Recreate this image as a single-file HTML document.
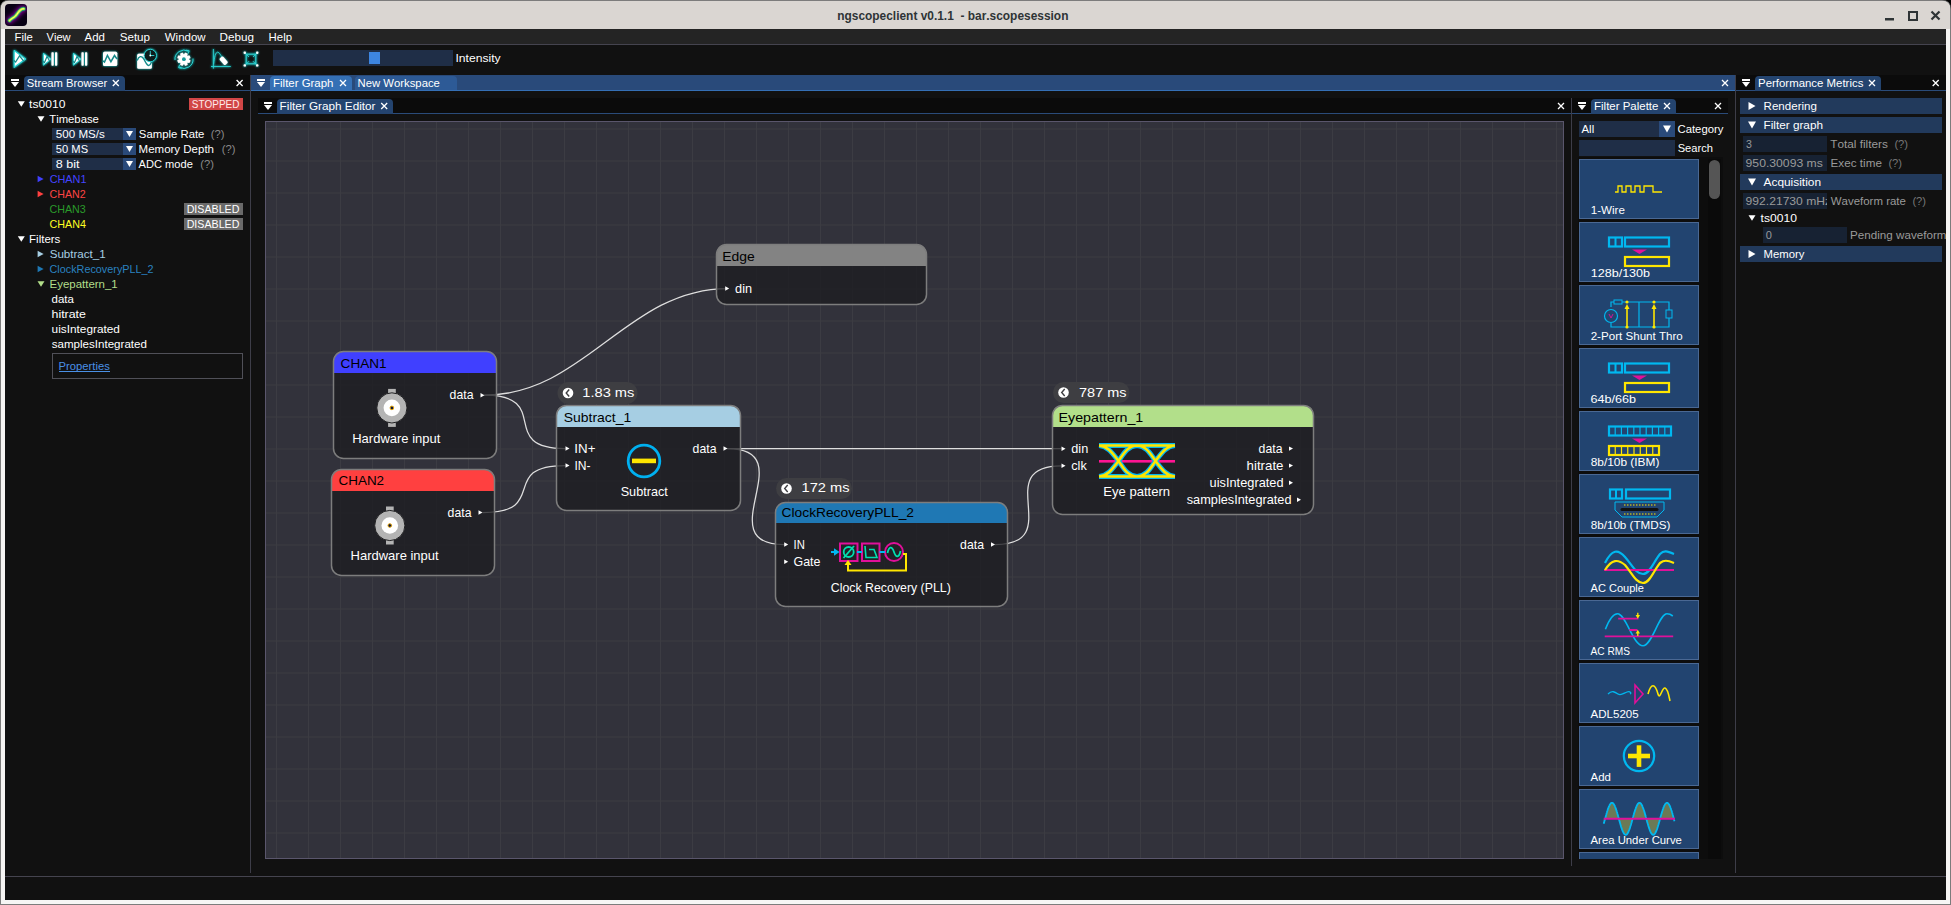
<!DOCTYPE html>
<html><head><meta charset="utf-8"><style>
html,body{margin:0;padding:0;width:1951px;height:905px;overflow:hidden;background:#000;}
svg{display:block;font-kerning:none;font-family:"Liberation Sans",sans-serif;}
</style></head><body>
<svg width="1951" height="905" viewBox="0 0 1951 905">
<rect x="0" y="0" width="1951" height="905" fill="#000" />
<path d="M0,9 Q0,0 9,0 L1942,0 Q1951,0 1951,9 L1951,905 L0,905 Z" fill="#7c7c7c" stroke="none" stroke-width="1" />
<path d="M1,9 Q1,1 9,1 L1942,1 Q1950,1 1950,9 L1950,904 L1,904 Z" fill="#f6f5f4" stroke="none" stroke-width="1" />
<path d="M1,9 Q1,1 9,1 L1942,1 Q1950,1 1950,9 L1950,29 L1,29 Z" fill="#dad6d2" stroke="none" stroke-width="1" />
<text xml:space="preserve" x="837.21" y="20" font-size="13.5" fill="#2e3436" font-weight="bold" textLength="231.23" lengthAdjust="spacingAndGlyphs" >ngscopeclient v0.1.1  - bar.scopesession</text>
<defs>
<linearGradient id="icbg" x1="0" y1="0" x2="1" y2="1"><stop offset="0" stop-color="#10002a"/><stop offset="0.45" stop-color="#4a0a5a"/><stop offset="1" stop-color="#05001a"/></linearGradient>
<filter id="glow" x="-40%" y="-40%" width="180%" height="180%"><feGaussianBlur in="SourceAlpha" stdDeviation="1.3" result="b"/><feFlood flood-color="#18a0a0" result="c"/><feComposite in="c" in2="b" operator="in" result="g"/><feMerge><feMergeNode in="g"/><feMergeNode in="g"/><feMergeNode in="SourceGraphic"/></feMerge></filter>
</defs>
<rect x="5" y="4" width="22" height="22" fill="#070014" rx="4" />
<filter id="icblur" x="-50%" y="-50%" width="200%" height="200%"><feGaussianBlur stdDeviation="2"/></filter>
<clipPath id="icclip"><rect x="5" y="4" width="22" height="22" rx="4"/></clipPath>
<g clip-path="url(#icclip)">
<path d="M9.5,20.5 C11,18.5 13.5,18 15.5,16 C17.5,14 18.5,11.5 20.5,10 C21.8,9 23,8.6 23.8,8.8" fill="none" stroke="#8a10a0" stroke-width="6" stroke-linecap="round" filter="url(#icblur)"/>
<path d="M9.5,20.5 C11,18.5 13.5,18 15.5,16 C17.5,14 18.5,11.5 20.5,10 C21.8,9 23,8.6 23.8,8.8" fill="none" stroke="#10b070" stroke-width="3.8" stroke-linecap="round"/>
<path d="M9.5,20.5 C11,18.5 13.5,18 15.5,16 C17.5,14 18.5,11.5 20.5,10 C21.8,9 23,8.6 23.8,8.8" fill="none" stroke="#d8f030" stroke-width="2.2" stroke-linecap="round"/>
<path d="M9.5,20.5 C11,18.5 13.5,18 15.5,16 C17.5,14 18.5,11.5 20.5,10 C21.8,9 23,8.6 23.8,8.8" fill="none" stroke="#ffffa0" stroke-width="0.8" stroke-linecap="round"/>
</g>
<rect x="1885" y="18" width="9" height="2.5" fill="#2e3436" />
<rect x="1909" y="12" width="8" height="8" fill="none" stroke="#2e3436" stroke-width="2" />
<path d="M1931.5,11.5 L1939.5,19.5 M1939.5,11.5 L1931.5,19.5" fill="none" stroke="#2e3436" stroke-width="2.2" />
<rect x="5" y="29" width="1941" height="871" fill="#111111" />
<rect x="5" y="29" width="1941" height="15" fill="#242424" />
<rect x="5" y="44" width="1941" height="1" fill="#45444f" />
<text xml:space="preserve" x="14.59" y="41" font-size="10.97" fill="#fff" textLength="18.28" lengthAdjust="spacingAndGlyphs" >File</text>
<text xml:space="preserve" x="46.53" y="41" font-size="10.97" fill="#fff" textLength="24.05" lengthAdjust="spacingAndGlyphs" >View</text>
<text xml:space="preserve" x="84.56" y="41" font-size="10.97" fill="#fff" textLength="20.36" lengthAdjust="spacingAndGlyphs" >Add</text>
<text xml:space="preserve" x="119.66" y="41" font-size="10.97" fill="#fff" textLength="30.39" lengthAdjust="spacingAndGlyphs" >Setup</text>
<text xml:space="preserve" x="164.80" y="41" font-size="10.97" fill="#fff" textLength="40.78" lengthAdjust="spacingAndGlyphs" >Window</text>
<text xml:space="preserve" x="219.57" y="41" font-size="10.97" fill="#fff" textLength="34.37" lengthAdjust="spacingAndGlyphs" >Debug</text>
<text xml:space="preserve" x="268.59" y="41" font-size="10.97" fill="#fff" textLength="23.45" lengthAdjust="spacingAndGlyphs" >Help</text>
<g filter="url(#glow)">
<path d="M14.2,50.5 L25.6,58.9 L14.2,67.3 Z" fill="#fff" stroke="#2ad4d4" stroke-width="1.2" stroke-linejoin="round"/>
<path d="M13.8,60.4 L15.6,62.1 L19.5,55.8 L23.5,60.9" fill="none" stroke="#138a8a" stroke-width="1.3" />
</g>
<g filter="url(#glow)">
<path d="M43.4,53.3 L51,59.2 L43.4,65.2 Z" fill="#fff" stroke="#2ad4d4" stroke-width="1" stroke-linejoin="round"/>
<path d="M43,61.5 L44.5,62.5 L47,56.5 L49.5,60.8" fill="none" stroke="#138a8a" stroke-width="1.2" />
<rect x="51.5" y="52.2" width="2.2" height="13.6" fill="#fff" rx="0.8" />
<rect x="55" y="52.2" width="2.2" height="13.6" fill="#fff" rx="0.8" />
</g>
<g filter="url(#glow)">
<path d="M73.4,53.3 L81,59.2 L73.4,65.2 Z" fill="#fff" stroke="#2ad4d4" stroke-width="1" stroke-linejoin="round"/>
<path d="M73,61.5 L74.5,62.5 L77,56.5 L79.5,60.8" fill="none" stroke="#138a8a" stroke-width="1.2" />
<rect x="81.5" y="52.2" width="2.2" height="13.6" fill="#fff" rx="0.8" />
<rect x="85" y="52.2" width="2.2" height="13.6" fill="#fff" rx="0.8" />
</g>
<g filter="url(#glow)">
<rect x="103" y="51.7" width="14.2" height="14.3" fill="#fff" rx="1.5" />
<path d="M103,60.8 L104.5,62 L107.4,55.5 L110.9,61.7 L114.5,55.5 L117,59" fill="none" stroke="#138a8a" stroke-width="1.5" />
</g>
<g filter="url(#glow)">
<rect x="137.2" y="53.8" width="14.6" height="15" fill="#fff" rx="1.5" />
<path d="M137.2,60.5 C139,56 141.5,55.5 143.5,58.5 C145.5,61.5 147,66 149,65.4 C150.5,65 151,63 151.8,61" fill="none" stroke="#138a8a" stroke-width="1.4" />
<circle cx="150.3" cy="55.5" r="6.2" fill="#0c1c1c" stroke="#2ad4d4" stroke-width="1"/>
<path d="M150.3,50.8 L150.3,55.5 L154.3,55.5" fill="none" stroke="#2ad4d4" stroke-width="0.9" />
<circle cx="150.3" cy="55.5" r="0.9" fill="#fff"/>
</g>
<g filter="url(#glow)">
<path d="M175,60 A9.1,9.1 0 0 1 188.4,51.2" fill="none" stroke="#2ad4d4" stroke-width="1" />
<path d="M186,50.2 L189.2,50.8 L188.2,53.6" fill="none" stroke="#2ad4d4" stroke-width="1" />
<path d="M193,58.5 A9.1,9.1 0 0 1 179.4,67.2" fill="none" stroke="#2ad4d4" stroke-width="1" />
<path d="M181.6,68.4 L178.6,67.6 L179.6,64.8" fill="none" stroke="#2ad4d4" stroke-width="1" />
<circle cx="183.9" cy="59.2" r="5" fill="#fff"/>
<rect x="182.4" y="52.6" width="3" height="3" rx="0.6" fill="#fff" transform="rotate(22.5 183.9 59.2)"/>
<rect x="182.4" y="52.6" width="3" height="3" rx="0.6" fill="#fff" transform="rotate(67.5 183.9 59.2)"/>
<rect x="182.4" y="52.6" width="3" height="3" rx="0.6" fill="#fff" transform="rotate(112.5 183.9 59.2)"/>
<rect x="182.4" y="52.6" width="3" height="3" rx="0.6" fill="#fff" transform="rotate(157.5 183.9 59.2)"/>
<rect x="182.4" y="52.6" width="3" height="3" rx="0.6" fill="#fff" transform="rotate(202.5 183.9 59.2)"/>
<rect x="182.4" y="52.6" width="3" height="3" rx="0.6" fill="#fff" transform="rotate(247.5 183.9 59.2)"/>
<rect x="182.4" y="52.6" width="3" height="3" rx="0.6" fill="#fff" transform="rotate(292.5 183.9 59.2)"/>
<rect x="182.4" y="52.6" width="3" height="3" rx="0.6" fill="#fff" transform="rotate(337.5 183.9 59.2)"/>
<circle cx="183.9" cy="59.2" r="1.9" fill="#139a9a"/>
</g>
<g filter="url(#glow)">
<path d="M213.4,49 L213.4,68.6 M211,66.5 L230.8,66.5" fill="none" stroke="#2ad4d4" stroke-width="0.9" />
<path d="M213.6,64 C214.5,57 215.5,52.2 217.6,52.2 C219.5,52.2 220.5,55 222,57.5" fill="none" stroke="#2ad4d4" stroke-width="0.9" />
<rect x="221.3" y="56.5" width="4.6" height="8.5" rx="1.2" fill="#fff" transform="rotate(-40 223.6 60.7)"/>
</g>
<g filter="url(#glow)">
<rect x="246.2" y="54.2" width="9.6" height="9.6" fill="none" stroke="#2ad4d4" stroke-width="1.1" />
<path d="M244.8,52.8 L249,57 M257.2,52.8 L253,57 M244.8,65.4 L249,61.2 M257.2,65.4 L253,61.2" fill="none" stroke="#2ad4d4" stroke-width="0.9" />
<circle cx="244.8" cy="52.8" r="1.2" fill="#fff"/>
<circle cx="257.2" cy="52.8" r="1.2" fill="#fff"/>
<circle cx="244.8" cy="65.4" r="1.2" fill="#fff"/>
<circle cx="257.2" cy="65.4" r="1.2" fill="#fff"/>
</g>
<rect x="273" y="50" width="180" height="16" fill="#1f2e47" />
<rect x="369" y="52" width="11" height="12" fill="#3d85e0" />
<text xml:space="preserve" x="455.48" y="62" font-size="10.97" fill="#fff" textLength="45.14" lengthAdjust="spacingAndGlyphs" >Intensity</text>
<rect x="250" y="75" width="1" height="798" fill="#3d3d48" />
<rect x="1735" y="75" width="1" height="798" fill="#3d3d48" />
<rect x="5" y="876" width="1941" height="1" fill="#45444f" />
<rect x="5" y="75" width="245" height="15" fill="#0b0b0b" />
<rect x="5" y="90" width="245" height="1" fill="#2a4b79" />
<rect x="11" y="79" width="8" height="2" fill="#fff" />
<path d="M11,82 L19,82 L15,87 Z" fill="#fff" stroke="none" stroke-width="1" />
<path d="M24,91 L24,80 Q24,76 28,76 L121,76 Q125,76 125,80 L125,91 Z" fill="#24446f" stroke="none" stroke-width="1" />
<text xml:space="preserve" x="26.79" y="87" font-size="10.97" fill="#fff" textLength="80.50" lengthAdjust="spacingAndGlyphs" >Stream Browser</text>
<path d="M112.8,80 L118.8,86 M118.8,80 L112.8,86" fill="none" stroke="#fff" stroke-width="1.3" />
<path d="M236.6,80 L242.6,86 M242.6,80 L236.6,86" fill="none" stroke="#fff" stroke-width="1.3" />
<rect x="251" y="75" width="1484" height="16" fill="#294a7a" />
<rect x="257" y="79" width="8" height="2" fill="#fff" />
<path d="M257,82 L265,82 L261,87 Z" fill="#fff" stroke="none" stroke-width="1" />
<rect x="251" y="90" width="1484" height="1" fill="#3570b5" />
<path d="M270,90 L270,80 Q270,76 274,76 L348,76 Q352,76 352,80 L352,90 Z" fill="#3570b5" stroke="none" stroke-width="1" />
<text xml:space="preserve" x="273.09" y="87" font-size="10.97" fill="#fff" textLength="60.39" lengthAdjust="spacingAndGlyphs" >Filter Graph</text>
<path d="M340,80 L346,86 M346,80 L340,86" fill="none" stroke="#fff" stroke-width="1.3" />
<path d="M355,90 L355,80 Q355,76 359,76 L453,76 Q457,76 457,80 L457,90 Z" fill="#2d5a96" stroke="none" stroke-width="1" />
<text xml:space="preserve" x="357.60" y="87" font-size="10.97" fill="#fff" textLength="82.28" lengthAdjust="spacingAndGlyphs" >New Workspace</text>
<path d="M1722,80 L1728,86 M1728,80 L1722,86" fill="none" stroke="#fff" stroke-width="1.3" />
<rect x="1736" y="75" width="210" height="15" fill="#0b0b0b" />
<rect x="1736" y="90" width="210" height="1" fill="#2a4b79" />
<rect x="1742" y="79" width="8" height="2" fill="#fff" />
<path d="M1742,82 L1750,82 L1746,87 Z" fill="#fff" stroke="none" stroke-width="1" />
<path d="M1755,91 L1755,80 Q1755,76 1759,76 L1877,76 Q1881,76 1881,80 L1881,91 Z" fill="#24446f" stroke="none" stroke-width="1" />
<text xml:space="preserve" x="1758.09" y="87" font-size="10.97" fill="#fff" textLength="105.26" lengthAdjust="spacingAndGlyphs" >Performance Metrics</text>
<path d="M1869,80 L1875,86 M1875,80 L1869,86" fill="none" stroke="#fff" stroke-width="1.3" />
<path d="M1932.7,80 L1938.7,86 M1938.7,80 L1932.7,86" fill="none" stroke="#fff" stroke-width="1.3" />
<rect x="258" y="98" width="1313" height="15" fill="#0b0b0b" />
<rect x="258" y="113" width="1313" height="1" fill="#2a4b79" />
<rect x="264" y="102" width="8" height="2" fill="#fff" />
<path d="M264,105 L272,105 L268,110 Z" fill="#fff" stroke="none" stroke-width="1" />
<path d="M277,114 L277,103 Q277,99 281,99 L389,99 Q393,99 393,103 L393,114 Z" fill="#24446f" stroke="none" stroke-width="1" />
<text xml:space="preserve" x="279.64" y="110" font-size="10.97" fill="#fff" textLength="95.86" lengthAdjust="spacingAndGlyphs" >Filter Graph Editor</text>
<path d="M381.2,103 L387.2,109 M387.2,103 L381.2,109" fill="none" stroke="#fff" stroke-width="1.3" />
<path d="M1558,103 L1564,109 M1564,103 L1558,109" fill="none" stroke="#fff" stroke-width="1.3" />
<rect x="1571" y="98" width="1" height="768" fill="#3d3d48" />
<rect x="1572" y="98" width="156" height="15" fill="#0b0b0b" />
<rect x="1572" y="113" width="156" height="1" fill="#2a4b79" />
<rect x="1578" y="102" width="8" height="2" fill="#fff" />
<path d="M1578,105 L1586,105 L1582,110 Z" fill="#fff" stroke="none" stroke-width="1" />
<path d="M1591,114 L1591,103 Q1591,99 1595,99 L1672,99 Q1676,99 1676,103 L1676,114 Z" fill="#24446f" stroke="none" stroke-width="1" />
<text xml:space="preserve" x="1594.09" y="110" font-size="10.97" fill="#fff" textLength="64.30" lengthAdjust="spacingAndGlyphs" >Filter Palette</text>
<path d="M1664,103 L1670,109 M1670,103 L1664,109" fill="none" stroke="#fff" stroke-width="1.3" />
<path d="M1715,103 L1721,109 M1721,103 L1715,109" fill="none" stroke="#fff" stroke-width="1.3" />
<path d="M17.8,101.25 L24.8,101.25 L21.3,106.75 Z" fill="#fff" stroke="none" stroke-width="1" />
<text xml:space="preserve" x="29.10" y="108" font-size="10.97" fill="#fff" textLength="36.33" lengthAdjust="spacingAndGlyphs" >ts0010</text>
<rect x="189" y="98" width="54" height="12" fill="#d14646" />
<text xml:space="preserve" x="191.74" y="108" font-size="10.97" fill="#ffeaea" textLength="47.67" lengthAdjust="spacingAndGlyphs" >STOPPED</text>
<path d="M37.5,116.25 L44.5,116.25 L41,121.75 Z" fill="#fff" stroke="none" stroke-width="1" />
<text xml:space="preserve" x="49.22" y="123" font-size="10.97" fill="#fff" textLength="49.66" lengthAdjust="spacingAndGlyphs" >Timebase</text>
<rect x="52" y="128" width="84" height="12" fill="#1f2e47" />
<rect x="123" y="128" width="13" height="12" fill="#2a4a7a" />
<path d="M126.0,131.0 L133.0,131.0 L129.5,137.0 Z" fill="#fff" stroke="none" stroke-width="1" />
<text xml:space="preserve" x="55.84" y="138" font-size="10.97" fill="#fff" textLength="49.01" lengthAdjust="spacingAndGlyphs" >500 MS/s</text>
<text xml:space="preserve" x="138.89" y="138" font-size="10.97" fill="#fff" textLength="65.52" lengthAdjust="spacingAndGlyphs" >Sample Rate</text>
<text xml:space="preserve" x="210.70" y="138" font-size="10.97" fill="#8a8a8a" textLength="13.67" lengthAdjust="spacingAndGlyphs" >(?)</text>
<rect x="52" y="143" width="84" height="12" fill="#1f2e47" />
<rect x="123" y="143" width="13" height="12" fill="#2a4a7a" />
<path d="M126.0,146.0 L133.0,146.0 L129.5,152.0 Z" fill="#fff" stroke="none" stroke-width="1" />
<text xml:space="preserve" x="55.86" y="153" font-size="10.97" fill="#fff" textLength="32.20" lengthAdjust="spacingAndGlyphs" >50 MS</text>
<text xml:space="preserve" x="138.58" y="153" font-size="10.97" fill="#fff" textLength="75.40" lengthAdjust="spacingAndGlyphs" >Memory Depth</text>
<text xml:space="preserve" x="221.70" y="153" font-size="10.97" fill="#8a8a8a" textLength="13.67" lengthAdjust="spacingAndGlyphs" >(?)</text>
<rect x="52" y="158" width="84" height="12" fill="#1f2e47" />
<rect x="123" y="158" width="13" height="12" fill="#2a4a7a" />
<path d="M126.0,161.0 L133.0,161.0 L129.5,167.0 Z" fill="#fff" stroke="none" stroke-width="1" />
<text xml:space="preserve" x="55.66" y="168" font-size="10.97" fill="#fff" textLength="23.78" lengthAdjust="spacingAndGlyphs" >8 bit</text>
<text xml:space="preserve" x="138.56" y="168" font-size="10.97" fill="#fff" textLength="54.31" lengthAdjust="spacingAndGlyphs" >ADC mode</text>
<text xml:space="preserve" x="200.20" y="168" font-size="10.97" fill="#8a8a8a" textLength="13.67" lengthAdjust="spacingAndGlyphs" >(?)</text>
<path d="M37.6,175.75 L43.6,179 L37.6,182.25 Z" fill="#4040ff" stroke="none" stroke-width="1" />
<text xml:space="preserve" x="49.65" y="183" font-size="10.97" fill="#4444ff" textLength="36.88" lengthAdjust="spacingAndGlyphs" >CHAN1</text>
<path d="M37.6,190.75 L43.6,194 L37.6,197.25 Z" fill="#ff4040" stroke="none" stroke-width="1" />
<text xml:space="preserve" x="49.55" y="198" font-size="10.97" fill="#ff4444" textLength="36.09" lengthAdjust="spacingAndGlyphs" >CHAN2</text>
<text xml:space="preserve" x="49.54" y="213" font-size="10.97" fill="#2a9a2a" textLength="36.24" lengthAdjust="spacingAndGlyphs" >CHAN3</text>
<text xml:space="preserve" x="49.54" y="228" font-size="10.97" fill="#ffff22" textLength="36.33" lengthAdjust="spacingAndGlyphs" >CHAN4</text>
<rect x="184" y="203" width="59" height="12" fill="#6a6a6a" />
<text xml:space="preserve" x="186.65" y="213" font-size="10.97" fill="#fff" textLength="52.79" lengthAdjust="spacingAndGlyphs" >DISABLED</text>
<rect x="184" y="218" width="59" height="12" fill="#6a6a6a" />
<text xml:space="preserve" x="186.65" y="228" font-size="10.97" fill="#fff" textLength="52.79" lengthAdjust="spacingAndGlyphs" >DISABLED</text>
<path d="M17.8,236.25 L24.8,236.25 L21.3,241.75 Z" fill="#fff" stroke="none" stroke-width="1" />
<text xml:space="preserve" x="29.08" y="243" font-size="10.97" fill="#fff" textLength="31.27" lengthAdjust="spacingAndGlyphs" >Filters</text>
<path d="M37.6,250.75 L43.6,254 L37.6,257.25 Z" fill="#a6cee3" stroke="none" stroke-width="1" />
<text xml:space="preserve" x="49.66" y="258" font-size="10.97" fill="#a6cee3" textLength="56.09" lengthAdjust="spacingAndGlyphs" >Subtract_1</text>
<path d="M37.6,265.75 L43.6,269 L37.6,272.25 Z" fill="#1f78b4" stroke="none" stroke-width="1" />
<text xml:space="preserve" x="49.54" y="273" font-size="10.97" fill="#2a82c0" textLength="104.11" lengthAdjust="spacingAndGlyphs" >ClockRecoveryPLL_2</text>
<path d="M37.5,281.25 L44.5,281.25 L41,286.75 Z" fill="#b2df8a" stroke="none" stroke-width="1" />
<text xml:space="preserve" x="49.59" y="288" font-size="10.97" fill="#b2df8a" textLength="68.16" lengthAdjust="spacingAndGlyphs" >Eyepattern_1</text>
<text xml:space="preserve" x="51.59" y="303" font-size="10.97" fill="#fff" textLength="22.36" lengthAdjust="spacingAndGlyphs" >data</text>
<text xml:space="preserve" x="51.59" y="318" font-size="10.97" fill="#fff" textLength="34.33" lengthAdjust="spacingAndGlyphs" >hitrate</text>
<text xml:space="preserve" x="51.62" y="333" font-size="10.97" fill="#fff" textLength="68.33" lengthAdjust="spacingAndGlyphs" >uisIntegrated</text>
<text xml:space="preserve" x="51.74" y="348" font-size="10.97" fill="#fff" textLength="95.19" lengthAdjust="spacingAndGlyphs" >samplesIntegrated</text>
<rect x="52.5" y="353.5" width="190" height="25" fill="none" stroke="#505058" stroke-width="1" />
<text xml:space="preserve" x="58.60" y="370" font-size="10.97" fill="#4a90e6" textLength="51.24" lengthAdjust="spacingAndGlyphs" >Properties</text>
<rect x="59" y="371" width="51" height="1" fill="#4a90e6" />
<rect x="265" y="121" width="1299" height="738" fill="#5a566c" />
<rect x="266" y="122" width="1297" height="736" fill="#32323b" />
<path d="M276.5,122 L276.5,858 M308.5,122 L308.5,858 M340.5,122 L340.5,858 M372.5,122 L372.5,858 M404.5,122 L404.5,858 M436.5,122 L436.5,858 M468.5,122 L468.5,858 M500.5,122 L500.5,858 M532.5,122 L532.5,858 M564.5,122 L564.5,858 M596.5,122 L596.5,858 M628.5,122 L628.5,858 M660.5,122 L660.5,858 M692.5,122 L692.5,858 M724.5,122 L724.5,858 M756.5,122 L756.5,858 M788.5,122 L788.5,858 M820.5,122 L820.5,858 M852.5,122 L852.5,858 M884.5,122 L884.5,858 M916.5,122 L916.5,858 M948.5,122 L948.5,858 M980.5,122 L980.5,858 M1012.5,122 L1012.5,858 M1044.5,122 L1044.5,858 M1076.5,122 L1076.5,858 M1108.5,122 L1108.5,858 M1140.5,122 L1140.5,858 M1172.5,122 L1172.5,858 M1204.5,122 L1204.5,858 M1236.5,122 L1236.5,858 M1268.5,122 L1268.5,858 M1300.5,122 L1300.5,858 M1332.5,122 L1332.5,858 M1364.5,122 L1364.5,858 M1396.5,122 L1396.5,858 M1428.5,122 L1428.5,858 M1460.5,122 L1460.5,858 M1492.5,122 L1492.5,858 M1524.5,122 L1524.5,858 M1556.5,122 L1556.5,858 M266,129 L1563,129 M266,161 L1563,161 M266,193 L1563,193 M266,225 L1563,225 M266,257 L1563,257 M266,289 L1563,289 M266,321 L1563,321 M266,353 L1563,353 M266,385 L1563,385 M266,417 L1563,417 M266,449 L1563,449 M266,481 L1563,481 M266,513 L1563,513 M266,545 L1563,545 M266,577 L1563,577 M266,609 L1563,609 M266,641 L1563,641 M266,673 L1563,673 M266,705 L1563,705 M266,737 L1563,737 M266,769 L1563,769 M266,801 L1563,801 M266,833 L1563,833" fill="none" stroke="#3c3c43" stroke-width="1" />
<clipPath id="cvclip"><rect x="266" y="122" width="1297" height="736"/></clipPath>
<path d="M484.5,395.2 C584.5,395.2 627.5,288.5 727.5,288.5" fill="none" stroke="#dedede" stroke-width="1.25" stroke-linecap="round"/>
<path d="M484.5,395.2 C553.2667111264255,395.2 496.2332888735744,448.5 565,448.5" fill="none" stroke="#dedede" stroke-width="1.25" stroke-linecap="round"/>
<path d="M483,512.5 C550.5996050847652,512.5 497.40039491523476,465.5 565,465.5" fill="none" stroke="#dedede" stroke-width="1.25" stroke-linecap="round"/>
<path d="M727.5,448.5 C827.5,448.5 961,448.5 1061,448.5" fill="none" stroke="#dedede" stroke-width="1.25" stroke-linecap="round"/>
<path d="M727.5,448.5 C804.2462264006732,448.5 707.2537735993268,544.5 784,544.5" fill="none" stroke="#dedede" stroke-width="1.25" stroke-linecap="round"/>
<path d="M995,544.5 C1067.375236124346,544.5 989.1247638756539,465.8 1061.5,465.8" fill="none" stroke="#dedede" stroke-width="1.25" stroke-linecap="round"/>
<rect x="716.5" y="244.5" width="210" height="60" rx="10" fill="#1c1c1f" fill-opacity="0.76"/>
<path d="M716.5,266 L716.5,254.5 Q716.5,244.5 726.5,244.5 L916.5,244.5 Q926.5,244.5 926.5,254.5 L926.5,266 Z" fill="#838383" stroke="none" stroke-width="1" />
<rect x="716.5" y="244.5" width="210" height="60" rx="10" fill="none" stroke="#7d7d7d" stroke-width="1.5"/>
<text xml:space="preserve" x="722.26" y="261" font-size="13.55" fill="#000" textLength="32.46" lengthAdjust="spacingAndGlyphs" >Edge</text>
<path d="M725.2,286.3 L729.2,288.5 L725.2,290.7 Z" fill="#fff" stroke="none" stroke-width="1" />
<text xml:space="preserve" x="735.09" y="293" font-size="11.97" fill="#fff" textLength="16.99" lengthAdjust="spacingAndGlyphs" >din</text>
<rect x="333.5" y="351.5" width="163" height="107" rx="10" fill="#1c1c1f" fill-opacity="0.76"/>
<path d="M333.5,373 L333.5,361.5 Q333.5,351.5 343.5,351.5 L486.5,351.5 Q496.5,351.5 496.5,361.5 L496.5,373 Z" fill="#4040ff" stroke="none" stroke-width="1" />
<rect x="333.5" y="351.5" width="163" height="107" rx="10" fill="none" stroke="#7d7d7d" stroke-width="1.5"/>
<text xml:space="preserve" x="340.61" y="368" font-size="13.55" fill="#000" textLength="46.05" lengthAdjust="spacingAndGlyphs" >CHAN1</text>
<rect x="388.09999999999997" y="388.9" width="7.7" height="6" fill="#b4b4b4" />
<rect x="388.09999999999997" y="420.9" width="7.7" height="6" fill="#b4b4b4" />
<circle cx="391.9" cy="407.9" r="15.1" fill="#b4b4b4" stroke="#222224" stroke-width="1"/>
<circle cx="391.9" cy="407.9" r="8.3" fill="#fff"/>
<circle cx="391.9" cy="407.9" r="1.8" fill="#101840" stroke="#e0a000" stroke-width="1"/>
<text xml:space="preserve" x="352.23" y="443" font-size="11.97" fill="#fff" textLength="88.16" lengthAdjust="spacingAndGlyphs" >Hardware input</text>
<text xml:space="preserve" x="449.61" y="399" font-size="11.97" fill="#fff" textLength="23.84" lengthAdjust="spacingAndGlyphs" >data</text>
<path d="M480.5,393.0 L484.5,395.2 L480.5,397.4 Z" fill="#fff" stroke="none" stroke-width="1" />
<rect x="331.5" y="469.5" width="163" height="106" rx="10" fill="#1c1c1f" fill-opacity="0.76"/>
<path d="M331.5,491 L331.5,479.5 Q331.5,469.5 341.5,469.5 L484.5,469.5 Q494.5,469.5 494.5,479.5 L494.5,491 Z" fill="#ff4040" stroke="none" stroke-width="1" />
<rect x="331.5" y="469.5" width="163" height="106" rx="10" fill="none" stroke="#7d7d7d" stroke-width="1.5"/>
<text xml:space="preserve" x="338.54" y="485" font-size="13.55" fill="#000" textLength="45.55" lengthAdjust="spacingAndGlyphs" >CHAN2</text>
<rect x="386.0" y="506.5" width="7.7" height="6" fill="#b4b4b4" />
<rect x="386.0" y="538.5" width="7.7" height="6" fill="#b4b4b4" />
<circle cx="389.8" cy="525.5" r="15.1" fill="#b4b4b4" stroke="#222224" stroke-width="1"/>
<circle cx="389.8" cy="525.5" r="8.3" fill="#fff"/>
<circle cx="389.8" cy="525.5" r="1.8" fill="#101840" stroke="#e0a000" stroke-width="1"/>
<text xml:space="preserve" x="350.53" y="560" font-size="11.97" fill="#fff" textLength="88.16" lengthAdjust="spacingAndGlyphs" >Hardware input</text>
<text xml:space="preserve" x="447.61" y="517" font-size="11.97" fill="#fff" textLength="23.84" lengthAdjust="spacingAndGlyphs" >data</text>
<path d="M478.5,510.3 L482.5,512.5 L478.5,514.7 Z" fill="#fff" stroke="none" stroke-width="1" />
<rect x="557.5" y="382" width="80.0" height="22" rx="11.0" fill="#3e3e42"/>
<circle cx="568.0" cy="393.0" r="5.3" fill="#fff"/>
<path d="M569.2,389.5 L566.2,393.0 L569.2,396.5" fill="none" stroke="#3e3e42" stroke-width="1.4" />
<text xml:space="preserve" x="582.28" y="397" font-size="13.65" fill="#fff" textLength="52.15" lengthAdjust="spacingAndGlyphs" >1.83 ms</text>
<rect x="556.5" y="405.5" width="184" height="105" rx="10" fill="#1c1c1f" fill-opacity="0.76"/>
<path d="M556.5,427 L556.5,415.5 Q556.5,405.5 566.5,405.5 L730.5,405.5 Q740.5,405.5 740.5,415.5 L740.5,427 Z" fill="#a6cee3" stroke="none" stroke-width="1" />
<rect x="556.5" y="405.5" width="184" height="105" rx="10" fill="none" stroke="#7d7d7d" stroke-width="1.5"/>
<text xml:space="preserve" x="563.72" y="421.5" font-size="13.55" fill="#000" textLength="67.48" lengthAdjust="spacingAndGlyphs" >Subtract_1</text>
<path d="M565.5,446.3 L569.5,448.5 L565.5,450.7 Z" fill="#fff" stroke="none" stroke-width="1" />
<text xml:space="preserve" x="574.39" y="453" font-size="11.97" fill="#fff" textLength="21.11" lengthAdjust="spacingAndGlyphs" >IN+</text>
<path d="M565.5,463.3 L569.5,465.5 L565.5,467.7 Z" fill="#fff" stroke="none" stroke-width="1" />
<text xml:space="preserve" x="574.51" y="469.5" font-size="11.97" fill="#fff" textLength="16.09" lengthAdjust="spacingAndGlyphs" >IN-</text>
<text xml:space="preserve" x="692.61" y="453" font-size="11.97" fill="#fff" textLength="23.84" lengthAdjust="spacingAndGlyphs" >data</text>
<path d="M723.5,446.3 L727.5,448.5 L723.5,450.7 Z" fill="#fff" stroke="none" stroke-width="1" />
<circle cx="644" cy="461" r="15.8" fill="none" stroke="#00b0f0" stroke-width="2.8"/>
<rect x="632" y="458.6" width="24" height="4.6" fill="#ffe600" />
<text xml:space="preserve" x="620.68" y="495.5" font-size="11.97" fill="#fff" textLength="47.11" lengthAdjust="spacingAndGlyphs" >Subtract</text>
<rect x="776" y="478" width="76" height="21" rx="10.5" fill="#3e3e42"/>
<circle cx="786.5" cy="488.5" r="5.3" fill="#fff"/>
<path d="M787.7,485.0 L784.7,488.5 L787.7,492.0" fill="none" stroke="#3e3e42" stroke-width="1.4" />
<text xml:space="preserve" x="801.59" y="492.4" font-size="13.65" fill="#fff" textLength="47.94" lengthAdjust="spacingAndGlyphs" >172 ms</text>
<rect x="775.5" y="502.5" width="232" height="104" rx="10" fill="#1c1c1f" fill-opacity="0.76"/>
<path d="M775.5,523 L775.5,512.5 Q775.5,502.5 785.5,502.5 L997.5,502.5 Q1007.5,502.5 1007.5,512.5 L1007.5,523 Z" fill="#1f78b4" stroke="none" stroke-width="1" />
<rect x="775.5" y="502.5" width="232" height="104" rx="10" fill="none" stroke="#7d7d7d" stroke-width="1.5"/>
<text xml:space="preserve" x="781.60" y="516.5" font-size="13.55" fill="#000" textLength="132.39" lengthAdjust="spacingAndGlyphs" >ClockRecoveryPLL_2</text>
<path d="M784.2,542.3 L788.2,544.5 L784.2,546.7 Z" fill="#fff" stroke="none" stroke-width="1" />
<text xml:space="preserve" x="793.58" y="548.5" font-size="11.97" fill="#fff" textLength="11.24" lengthAdjust="spacingAndGlyphs" >IN</text>
<path d="M784.2,559.5 L788.2,561.7 L784.2,563.9000000000001 Z" fill="#fff" stroke="none" stroke-width="1" />
<text xml:space="preserve" x="793.52" y="565.8" font-size="11.97" fill="#fff" textLength="26.94" lengthAdjust="spacingAndGlyphs" >Gate</text>
<text xml:space="preserve" x="960.11" y="548.5" font-size="11.97" fill="#fff" textLength="23.84" lengthAdjust="spacingAndGlyphs" >data</text>
<path d="M991,542.3 L995,544.5 L991,546.7 Z" fill="#fff" stroke="none" stroke-width="1" />
<rect x="840" y="543.5" width="17.5" height="17.5" fill="none" stroke="#e0109a" stroke-width="2" />
<rect x="862" y="543.5" width="17.5" height="17.5" fill="none" stroke="#e0109a" stroke-width="2" />
<circle cx="894" cy="552" r="9" fill="none" stroke="#e0109a" stroke-width="2"/>
<path d="M831,552 L836,552 M857,552 L862,552 M879.5,552 L885,552" fill="none" stroke="#00b8f0" stroke-width="2" />
<path d="M834,548.3 L839.5,552 L834,555.7 Z" fill="#00b8f0" stroke="none" stroke-width="1" />
<path d="M843.5,558 L854,546" fill="none" stroke="#00e0b0" stroke-width="1.8" />
<circle cx="848.7" cy="552" r="5" fill="none" stroke="#00e0b0" stroke-width="1.8"/>
<path d="M865,546 L866,557.5 L877,557.5 L874,549.5 L869,549.5" fill="none" stroke="#00e0b0" stroke-width="1.6" />
<path d="M887.5,553 C889,546 892,546 894,552 C896,558 899,558 900.5,551" fill="none" stroke="#00e0b0" stroke-width="1.8" />
<path d="M903,554 L906,554 L906,570.5 L848,570.5 L848,563" fill="none" stroke="#ffe600" stroke-width="2" />
<path d="M844.5,565 L848,560 L851.5,565 Z" fill="#ffe600" stroke="none" stroke-width="1" />
<text xml:space="preserve" x="830.87" y="591.8" font-size="11.97" fill="#fff" textLength="119.89" lengthAdjust="spacingAndGlyphs" >Clock Recovery (PLL)</text>
<rect x="1053" y="382" width="76.5" height="21" rx="10.5" fill="#3e3e42"/>
<circle cx="1063.5" cy="392.5" r="5.3" fill="#fff"/>
<path d="M1064.7,389.0 L1061.7,392.5 L1064.7,396.0" fill="none" stroke="#3e3e42" stroke-width="1.4" />
<text xml:space="preserve" x="1079.06" y="397.4" font-size="13.65" fill="#fff" textLength="47.47" lengthAdjust="spacingAndGlyphs" >787 ms</text>
<rect x="1052.5" y="405.5" width="261" height="109" rx="10" fill="#1c1c1f" fill-opacity="0.76"/>
<path d="M1052.5,427 L1052.5,415.5 Q1052.5,405.5 1062.5,405.5 L1303.5,405.5 Q1313.5,405.5 1313.5,415.5 L1313.5,427 Z" fill="#b2df8a" stroke="none" stroke-width="1" />
<rect x="1052.5" y="405.5" width="261" height="109" rx="10" fill="none" stroke="#7d7d7d" stroke-width="1.5"/>
<text xml:space="preserve" x="1058.60" y="422" font-size="13.55" fill="#000" textLength="84.61" lengthAdjust="spacingAndGlyphs" >Eyepattern_1</text>
<path d="M1061.5,446.6 L1065.5,448.8 L1061.5,451.0 Z" fill="#fff" stroke="none" stroke-width="1" />
<text xml:space="preserve" x="1071.29" y="453" font-size="11.97" fill="#fff" textLength="16.99" lengthAdjust="spacingAndGlyphs" >din</text>
<path d="M1061.5,463.6 L1065.5,465.8 L1061.5,468.0 Z" fill="#fff" stroke="none" stroke-width="1" />
<text xml:space="preserve" x="1071.29" y="470" font-size="11.97" fill="#fff" textLength="15.46" lengthAdjust="spacingAndGlyphs" >clk</text>
<text xml:space="preserve" x="1258.61" y="453" font-size="11.97" fill="#fff" textLength="23.84" lengthAdjust="spacingAndGlyphs" >data</text>
<path d="M1289.0,446.40000000000003 L1293.0,448.6 L1289.0,450.8 Z" fill="#fff" stroke="none" stroke-width="1" />
<text xml:space="preserve" x="1246.62" y="470" font-size="11.97" fill="#fff" textLength="36.88" lengthAdjust="spacingAndGlyphs" >hitrate</text>
<path d="M1289.0,463.40000000000003 L1293.0,465.6 L1289.0,467.8 Z" fill="#fff" stroke="none" stroke-width="1" />
<text xml:space="preserve" x="1209.64" y="487" font-size="11.97" fill="#fff" textLength="73.89" lengthAdjust="spacingAndGlyphs" >uisIntegrated</text>
<path d="M1289.0,480.6 L1293.0,482.8 L1289.0,485.0 Z" fill="#fff" stroke="none" stroke-width="1" />
<text xml:space="preserve" x="1186.76" y="504" font-size="11.97" fill="#fff" textLength="104.76" lengthAdjust="spacingAndGlyphs" >samplesIntegrated</text>
<path d="M1297.0,497.5 L1301.0,499.7 L1297.0,501.9 Z" fill="#fff" stroke="none" stroke-width="1" />
<rect x="1099" y="460" width="76" height="2.6" fill="#ff1493" />
<path d="M1099,445.5 L1175,445.5 M1099,476.5 L1175,476.5 M1099,445.5 C1108,446 1113,454 1118.5,461 C1123,467 1127,476 1137,476.5 C1147,476 1151,467 1155.5,461 C1161,454 1166,446 1175,445.5 M1099,476.5 C1108,476 1113,468 1118.5,461 C1123,455 1127,446 1137,445.5 C1147,446 1151,455 1155.5,461 C1161,468 1166,476 1175,476.5" fill="none" stroke="#00b8f0" stroke-width="5" />
<path d="M1099,445.5 L1175,445.5 M1099,476.5 L1175,476.5 M1099,445.5 C1108,446 1113,454 1118.5,461 C1123,467 1127,476 1137,476.5 C1147,476 1151,467 1155.5,461 C1161,454 1166,446 1175,445.5 M1099,476.5 C1108,476 1113,468 1118.5,461 C1123,455 1127,446 1137,445.5 C1147,446 1151,455 1155.5,461 C1161,468 1166,476 1175,476.5" fill="none" stroke="#ffe600" stroke-width="2.6" />
<text xml:space="preserve" x="1103.23" y="496" font-size="11.97" fill="#fff" textLength="66.92" lengthAdjust="spacingAndGlyphs" >Eye pattern</text>
<rect x="1579" y="121" width="96" height="16" fill="#1f2e47" />
<rect x="1659" y="121" width="16" height="16" fill="#2a4a7a" />
<path d="M1663.0,125.5 L1671.0,125.5 L1667,132.5 Z" fill="#fff" stroke="none" stroke-width="1" />
<text xml:space="preserve" x="1581.56" y="133" font-size="10.97" fill="#fff" textLength="12.62" lengthAdjust="spacingAndGlyphs" >All</text>
<text xml:space="preserve" x="1677.51" y="133" font-size="10.97" fill="#fff" textLength="45.88" lengthAdjust="spacingAndGlyphs" >Category</text>
<rect x="1579" y="140" width="96" height="16" fill="#1f2e47" />
<text xml:space="preserve" x="1677.68" y="152" font-size="10.97" fill="#fff" textLength="35.27" lengthAdjust="spacingAndGlyphs" >Search</text>
<rect x="1578" y="157" width="145" height="702" fill="#0d0d0d" />
<clipPath id="palclip"><rect x="1578" y="157" width="145" height="702"/></clipPath>
<rect x="1708" y="159" width="13" height="700" fill="#0a0a0a" />
<rect x="1709" y="160" width="11" height="39" fill="#555555" rx="5.5" />
<g clip-path="url(#palclip)">
<rect x="1579" y="159" width="120" height="60" fill="#4a6893" />
<rect x="1580" y="160" width="118" height="58" fill="#224470" />
<text xml:space="preserve" x="1590.77" y="214" font-size="10.97" fill="#fff" textLength="34.12" lengthAdjust="spacingAndGlyphs" >1-Wire</text>
<rect x="1579" y="222" width="120" height="60" fill="#4a6893" />
<rect x="1580" y="223" width="118" height="58" fill="#224470" />
<text xml:space="preserve" x="1590.69" y="277" font-size="10.97" fill="#fff" textLength="59.40" lengthAdjust="spacingAndGlyphs" >128b/130b</text>
<rect x="1579" y="285" width="120" height="60" fill="#4a6893" />
<rect x="1580" y="286" width="118" height="58" fill="#224470" />
<text xml:space="preserve" x="1590.68" y="340" font-size="10.97" fill="#fff" textLength="92.13" lengthAdjust="spacingAndGlyphs" >2-Port Shunt Thro</text>
<rect x="1579" y="348" width="120" height="60" fill="#4a6893" />
<rect x="1580" y="349" width="118" height="58" fill="#224470" />
<text xml:space="preserve" x="1590.59" y="403" font-size="10.97" fill="#fff" textLength="45.50" lengthAdjust="spacingAndGlyphs" >64b/66b</text>
<rect x="1579" y="411" width="120" height="60" fill="#4a6893" />
<rect x="1580" y="412" width="118" height="58" fill="#224470" />
<text xml:space="preserve" x="1590.69" y="466" font-size="10.97" fill="#fff" textLength="68.72" lengthAdjust="spacingAndGlyphs" >8b/10b (IBM)</text>
<rect x="1579" y="474" width="120" height="60" fill="#4a6893" />
<rect x="1580" y="475" width="118" height="58" fill="#224470" />
<text xml:space="preserve" x="1590.70" y="529" font-size="10.97" fill="#fff" textLength="79.70" lengthAdjust="spacingAndGlyphs" >8b/10b (TMDS)</text>
<rect x="1579" y="537" width="120" height="60" fill="#4a6893" />
<rect x="1580" y="538" width="118" height="58" fill="#224470" />
<text xml:space="preserve" x="1590.56" y="592" font-size="10.97" fill="#fff" textLength="53.30" lengthAdjust="spacingAndGlyphs" >AC Couple</text>
<rect x="1579" y="600" width="120" height="60" fill="#4a6893" />
<rect x="1580" y="601" width="118" height="58" fill="#224470" />
<text xml:space="preserve" x="1590.56" y="655" font-size="10.97" fill="#fff" textLength="39.46" lengthAdjust="spacingAndGlyphs" >AC RMS</text>
<rect x="1579" y="663" width="120" height="60" fill="#4a6893" />
<rect x="1580" y="664" width="118" height="58" fill="#224470" />
<text xml:space="preserve" x="1590.56" y="718" font-size="10.97" fill="#fff" textLength="48.16" lengthAdjust="spacingAndGlyphs" >ADL5205</text>
<rect x="1579" y="726" width="120" height="60" fill="#4a6893" />
<rect x="1580" y="727" width="118" height="58" fill="#224470" />
<text xml:space="preserve" x="1590.56" y="781" font-size="10.97" fill="#fff" textLength="20.36" lengthAdjust="spacingAndGlyphs" >Add</text>
<rect x="1579" y="789" width="120" height="60" fill="#4a6893" />
<rect x="1580" y="790" width="118" height="58" fill="#224470" />
<text xml:space="preserve" x="1590.56" y="844" font-size="10.97" fill="#fff" textLength="91.32" lengthAdjust="spacingAndGlyphs" >Area Under Curve</text>
<rect x="1579" y="852" width="120" height="60" fill="#4a6893" />
<rect x="1580" y="853" width="118" height="58" fill="#224470" />
<path d="M1615,192 L1618,192 L1618,186 L1622,186 L1622,192 L1626,192 L1626,186 L1631,186 L1631,192 L1635,192 L1635,186 L1640,186 L1640,192 L1644,192 L1644,186 L1653,186 L1653,192 L1662,192" fill="none" stroke="#ffe600" stroke-width="1.3" />
<rect x="1609" y="237.5" width="13" height="9" fill="none" stroke="#00b8f0" stroke-width="2.2" />
<path d="M1615.5,237 L1615.5,247" fill="none" stroke="#00b8f0" stroke-width="2" />
<rect x="1625" y="237.5" width="44" height="9" fill="none" stroke="#00b8f0" stroke-width="2.2" />
<path d="M1632,249.5 L1647,249.5 L1639.5,254 Z" fill="#e0109a" stroke="none" stroke-width="1" />
<rect x="1625" y="257" width="44" height="9" fill="none" stroke="#ffe600" stroke-width="2.2" />
<path d="M1611,307 L1611,302 L1669,302 L1669,327 L1611,327 L1611,323" fill="none" stroke="#00b8f0" stroke-width="1.2" />
<rect x="1614" y="300" width="8" height="4" fill="#224470" stroke="#00b8f0" stroke-width="1"/>
<path d="M1639,302 L1639,327" fill="none" stroke="#00b8f0" stroke-width="1.2" />
<circle cx="1611" cy="316" r="6.5" fill="#224470" stroke="#00b8f0" stroke-width="1.2"/>
<path d="M1609,314 L1611,318 L1613,314" fill="none" stroke="#e0109a" stroke-width="0.9" />
<rect x="1666" y="310" width="6" height="8" fill="#224470" stroke="#00b8f0" stroke-width="1"/>
<path d="M1627,327 L1627,306" fill="none" stroke="#ffe600" stroke-width="1.6" />
<path d="M1624.5,309 L1627,304 L1629.5,309 Z" fill="#ffe600" stroke="none" stroke-width="1" />
<circle cx="1627" cy="302" r="1.6" fill="#ffe600"/><circle cx="1627" cy="327" r="1.6" fill="#ffe600"/>
<path d="M1654,327 L1654,306" fill="none" stroke="#ffe600" stroke-width="1.6" />
<path d="M1651.5,309 L1654,304 L1656.5,309 Z" fill="#ffe600" stroke="none" stroke-width="1" />
<circle cx="1654" cy="302" r="1.6" fill="#ffe600"/><circle cx="1654" cy="327" r="1.6" fill="#ffe600"/>
<rect x="1609" y="363.5" width="13" height="9" fill="none" stroke="#00b8f0" stroke-width="2.2" />
<path d="M1615.5,363 L1615.5,373" fill="none" stroke="#00b8f0" stroke-width="2" />
<rect x="1625" y="363.5" width="44" height="9" fill="none" stroke="#00b8f0" stroke-width="2.2" />
<path d="M1632,375.5 L1647,375.5 L1639.5,380 Z" fill="#e0109a" stroke="none" stroke-width="1" />
<rect x="1625" y="383" width="44" height="9" fill="none" stroke="#ffe600" stroke-width="2.2" />
<rect x="1609" y="426.5" width="62" height="9" fill="none" stroke="#00b8f0" stroke-width="2.2" />
<path d="M1615.2,426 L1615.2,436" fill="none" stroke="#00b8f0" stroke-width="1.2" />
<path d="M1621.4,426 L1621.4,436" fill="none" stroke="#00b8f0" stroke-width="1.2" />
<path d="M1627.6,426 L1627.6,436" fill="none" stroke="#00b8f0" stroke-width="1.2" />
<path d="M1633.8,426 L1633.8,436" fill="none" stroke="#00b8f0" stroke-width="1.2" />
<path d="M1640.0,426 L1640.0,436" fill="none" stroke="#00b8f0" stroke-width="1.2" />
<path d="M1646.2,426 L1646.2,436" fill="none" stroke="#00b8f0" stroke-width="1.2" />
<path d="M1652.4,426 L1652.4,436" fill="none" stroke="#00b8f0" stroke-width="1.2" />
<path d="M1658.6,426 L1658.6,436" fill="none" stroke="#00b8f0" stroke-width="1.2" />
<path d="M1664.8,426 L1664.8,436" fill="none" stroke="#00b8f0" stroke-width="1.2" />
<path d="M1632,438.5 L1647,438.5 L1639.5,443 Z" fill="#e0109a" stroke="none" stroke-width="1" />
<rect x="1609" y="446" width="50" height="9" fill="none" stroke="#ffe600" stroke-width="2.2" />
<path d="M1615.25,445.5 L1615.25,455.5" fill="none" stroke="#ffe600" stroke-width="1.2" />
<path d="M1621.5,445.5 L1621.5,455.5" fill="none" stroke="#ffe600" stroke-width="1.2" />
<path d="M1627.75,445.5 L1627.75,455.5" fill="none" stroke="#ffe600" stroke-width="1.2" />
<path d="M1634.0,445.5 L1634.0,455.5" fill="none" stroke="#ffe600" stroke-width="1.2" />
<path d="M1640.25,445.5 L1640.25,455.5" fill="none" stroke="#ffe600" stroke-width="1.2" />
<path d="M1646.5,445.5 L1646.5,455.5" fill="none" stroke="#ffe600" stroke-width="1.2" />
<path d="M1652.75,445.5 L1652.75,455.5" fill="none" stroke="#ffe600" stroke-width="1.2" />
<rect x="1610" y="489.5" width="12" height="9" fill="none" stroke="#00b8f0" stroke-width="2.2" />
<path d="M1616,489 L1616,499" fill="none" stroke="#00b8f0" stroke-width="2" />
<rect x="1626" y="489.5" width="44" height="9" fill="none" stroke="#00b8f0" stroke-width="2.2" />
<path d="M1615,502 L1664,502 L1664,510 L1657,517 L1622,517 L1615,510 Z" fill="none" stroke="#00b8f0" stroke-width="1" />
<path d="M1622,509.5 L1657,509.5" fill="none" stroke="#111" stroke-width="3" stroke-linecap="round"/>
<path d="M1624,505 L1656,505 M1624,514 L1656,514" fill="none" stroke="#ffe600" stroke-width="1" stroke-dasharray="1.5 1.5"/>
<path d="M1605,563 C1612,549 1618,549 1625,557 C1632,565 1636,574 1643,574 C1650,574 1654,561 1660,554 C1664,550 1667,551 1674,554" fill="none" stroke="#00b8f0" stroke-width="2.2" />
<path d="M1604,570 L1674,570" fill="none" stroke="#e0109a" stroke-width="2" />
<path d="M1605,570 C1612,559 1618,559 1625,565 C1632,573 1636,583 1643,583 C1650,583 1654,570 1660,563 C1664,560 1667,560 1674,563" fill="none" stroke="#ffe600" stroke-width="2.2" />
<path d="M1605.4,629.3 C1609,620 1613,613.8 1617.5,613.8 C1626,613.8 1633,645.8 1643,645.8 C1652,645.8 1659,613.8 1667,613.8 C1669.5,613.8 1671.5,615 1672.8,616" fill="none" stroke="#00b8f0" stroke-width="1.6" />
<path d="M1604.7,636.3 L1673.2,636.3 M1618.2,618.6 L1638.5,618.6 M1629.2,630 L1637.4,630" fill="none" stroke="#e0109a" stroke-width="1.8" />
<path d="M1637.8,612.7 L1637.8,616 M1637.8,636 L1637.8,633" fill="none" stroke="#ffe600" stroke-width="1.3" />
<path d="M1635.6,615 L1640,615 L1637.8,618.8 Z M1635.6,633.5 L1640,633.5 L1637.8,629.8 Z" fill="#ffe600" stroke="none" stroke-width="1" />
<path d="M1608,694 C1612,690 1615,692 1618,694 C1621,696 1624,693 1627,692 C1630,691 1632,693 1630,694" fill="none" stroke="#00b8f0" stroke-width="1.3" />
<path d="M1635,685 L1643,694 L1635,703 Z" fill="none" stroke="#e0109a" stroke-width="1.6" />
<path d="M1648,694 C1651,683 1655,683 1658,694 C1660,701 1662,687 1665,688 C1668,689 1669,696 1670,701" fill="none" stroke="#ffe600" stroke-width="1.6" />
<circle cx="1639" cy="756" r="15.2" fill="none" stroke="#00b8f0" stroke-width="2.2"/>
<rect x="1628" y="753.7" width="22" height="4.6" fill="#ffe600" />
<rect x="1636.7" y="745.3" width="4.6" height="21.6" fill="#ffe600" />
<path d="M1603.7,823.8 L1604.1,822.6 L1604.4,821.3 L1604.8,820.0 L1605.1,818.7 L1605.5,817.4 L1605.8,816.2 L1606.2,814.9 L1606.5,813.7 L1606.9,812.5 L1607.2,811.3 L1607.6,810.2 L1607.9,809.1 L1608.3,808.1 L1608.7,807.2 L1609.0,806.3 L1609.4,805.6 L1609.7,804.9 L1610.1,804.3 L1610.4,803.8 L1610.8,803.4 L1611.1,803.1 L1611.5,802.9 L1611.8,802.8 L1612.2,802.8 L1612.5,802.9 L1612.9,803.2 L1613.3,803.5 L1613.6,803.9 L1614.0,804.4 L1614.3,805.0 L1614.7,805.7 L1615.0,806.5 L1615.4,807.4 L1615.7,808.4 L1616.1,809.4 L1616.4,810.4 L1616.8,811.6 L1617.2,812.7 L1617.5,814.0 L1617.9,815.2 L1618.2,816.5 L1618.6,817.8 L1618.9,819.1 L1619.3,820.4 L1619.6,821.6 L1620.0,822.9 L1620.3,824.1 L1620.7,825.3 L1621.0,826.5 L1621.4,827.6 L1621.8,828.7 L1622.1,829.6 L1622.5,830.6 L1622.8,831.4 L1623.2,832.2 L1623.5,832.8 L1623.9,833.4 L1624.2,833.9 L1624.6,834.3 L1624.9,834.5 L1625.3,834.7 L1625.6,834.8 L1626.0,834.8 L1626.4,834.6 L1626.7,834.4 L1627.1,834.1 L1627.4,833.6 L1627.8,833.1 L1628.1,832.5 L1628.5,831.7 L1628.8,830.9 L1629.2,830.0 L1629.5,829.1 L1629.9,828.1 L1630.2,827.0 L1630.6,825.8 L1631.0,824.7 L1631.3,823.4 L1631.7,822.2 L1632.0,820.9 L1632.4,819.6 L1632.7,818.3 L1633.1,817.0 L1633.4,815.8 L1633.8,814.5 L1634.1,813.3 L1634.5,812.1 L1634.9,810.9 L1635.2,809.8 L1635.6,808.8 L1635.9,807.8 L1636.3,806.9 L1636.6,806.1 L1637.0,805.3 L1637.3,804.7 L1637.7,804.1 L1638.0,803.7 L1638.4,803.3 L1638.7,803.0 L1639.1,802.9 L1639.5,802.8 L1639.8,802.8 L1640.2,803.0 L1640.5,803.3 L1640.9,803.6 L1641.2,804.1 L1641.6,804.6 L1641.9,805.3 L1642.3,806.0 L1642.6,806.8 L1643.0,807.7 L1643.3,808.7 L1643.7,809.7 L1644.1,810.8 L1644.4,811.9 L1644.8,813.1 L1645.1,814.4 L1645.5,815.6 L1645.8,816.9 L1646.2,818.2 L1646.5,819.5 L1646.9,820.8 L1647.2,822.0 L1647.6,823.3 L1648.0,824.5 L1648.3,825.7 L1648.7,826.9 L1649.0,827.9 L1649.4,829.0 L1649.7,829.9 L1650.1,830.8 L1650.4,831.6 L1650.8,832.4 L1651.1,833.0 L1651.5,833.6 L1651.8,834.0 L1652.2,834.4 L1652.6,834.6 L1652.9,834.8 L1653.3,834.8 L1653.6,834.7 L1654.0,834.6 L1654.3,834.3 L1654.7,833.9 L1655.0,833.5 L1655.4,832.9 L1655.7,832.2 L1656.1,831.5 L1656.4,830.7 L1656.8,829.8 L1657.2,828.8 L1657.5,827.7 L1657.9,826.6 L1658.2,825.5 L1658.6,824.3 L1658.9,823.0 L1659.3,821.8 L1659.6,820.5 L1660.0,819.2 L1660.3,817.9 L1660.7,816.6 L1661.0,815.4 L1661.4,814.1 L1661.8,812.9 L1662.1,811.7 L1662.5,810.6 L1662.8,809.5 L1663.2,808.5 L1663.5,807.5 L1663.9,806.6 L1664.2,805.8 L1664.6,805.1 L1664.9,804.5 L1665.3,804.0 L1665.7,803.5 L1666.0,803.2 L1666.4,803.0 L1666.7,802.8 L1667.1,802.8 L1667.4,802.9 L1667.8,803.1 L1668.1,803.4 L1668.5,803.7 L1668.8,804.2 L1669.2,804.8 L1669.5,805.5 L1669.9,806.2 L1670.3,807.1 L1670.6,808.0 L1671.0,809.0 L1671.3,810.0 L1671.7,811.1 L1672.0,812.3 L1672.4,813.5 L1672.7,814.8 L1673.1,816.0 L1673.4,817.3 L1673.8,818.6 L1674.1,819.9 L1674.5,821.2 L1674.5,818.8 L1603.7,818.8 Z" fill="#6b7a55"/>
<path d="M1603.7,823.8 L1604.1,822.6 L1604.4,821.3 L1604.8,820.0 L1605.1,818.7 L1605.5,817.4 L1605.8,816.2 L1606.2,814.9 L1606.5,813.7 L1606.9,812.5 L1607.2,811.3 L1607.6,810.2 L1607.9,809.1 L1608.3,808.1 L1608.7,807.2 L1609.0,806.3 L1609.4,805.6 L1609.7,804.9 L1610.1,804.3 L1610.4,803.8 L1610.8,803.4 L1611.1,803.1 L1611.5,802.9 L1611.8,802.8 L1612.2,802.8 L1612.5,802.9 L1612.9,803.2 L1613.3,803.5 L1613.6,803.9 L1614.0,804.4 L1614.3,805.0 L1614.7,805.7 L1615.0,806.5 L1615.4,807.4 L1615.7,808.4 L1616.1,809.4 L1616.4,810.4 L1616.8,811.6 L1617.2,812.7 L1617.5,814.0 L1617.9,815.2 L1618.2,816.5 L1618.6,817.8 L1618.9,819.1 L1619.3,820.4 L1619.6,821.6 L1620.0,822.9 L1620.3,824.1 L1620.7,825.3 L1621.0,826.5 L1621.4,827.6 L1621.8,828.7 L1622.1,829.6 L1622.5,830.6 L1622.8,831.4 L1623.2,832.2 L1623.5,832.8 L1623.9,833.4 L1624.2,833.9 L1624.6,834.3 L1624.9,834.5 L1625.3,834.7 L1625.6,834.8 L1626.0,834.8 L1626.4,834.6 L1626.7,834.4 L1627.1,834.1 L1627.4,833.6 L1627.8,833.1 L1628.1,832.5 L1628.5,831.7 L1628.8,830.9 L1629.2,830.0 L1629.5,829.1 L1629.9,828.1 L1630.2,827.0 L1630.6,825.8 L1631.0,824.7 L1631.3,823.4 L1631.7,822.2 L1632.0,820.9 L1632.4,819.6 L1632.7,818.3 L1633.1,817.0 L1633.4,815.8 L1633.8,814.5 L1634.1,813.3 L1634.5,812.1 L1634.9,810.9 L1635.2,809.8 L1635.6,808.8 L1635.9,807.8 L1636.3,806.9 L1636.6,806.1 L1637.0,805.3 L1637.3,804.7 L1637.7,804.1 L1638.0,803.7 L1638.4,803.3 L1638.7,803.0 L1639.1,802.9 L1639.5,802.8 L1639.8,802.8 L1640.2,803.0 L1640.5,803.3 L1640.9,803.6 L1641.2,804.1 L1641.6,804.6 L1641.9,805.3 L1642.3,806.0 L1642.6,806.8 L1643.0,807.7 L1643.3,808.7 L1643.7,809.7 L1644.1,810.8 L1644.4,811.9 L1644.8,813.1 L1645.1,814.4 L1645.5,815.6 L1645.8,816.9 L1646.2,818.2 L1646.5,819.5 L1646.9,820.8 L1647.2,822.0 L1647.6,823.3 L1648.0,824.5 L1648.3,825.7 L1648.7,826.9 L1649.0,827.9 L1649.4,829.0 L1649.7,829.9 L1650.1,830.8 L1650.4,831.6 L1650.8,832.4 L1651.1,833.0 L1651.5,833.6 L1651.8,834.0 L1652.2,834.4 L1652.6,834.6 L1652.9,834.8 L1653.3,834.8 L1653.6,834.7 L1654.0,834.6 L1654.3,834.3 L1654.7,833.9 L1655.0,833.5 L1655.4,832.9 L1655.7,832.2 L1656.1,831.5 L1656.4,830.7 L1656.8,829.8 L1657.2,828.8 L1657.5,827.7 L1657.9,826.6 L1658.2,825.5 L1658.6,824.3 L1658.9,823.0 L1659.3,821.8 L1659.6,820.5 L1660.0,819.2 L1660.3,817.9 L1660.7,816.6 L1661.0,815.4 L1661.4,814.1 L1661.8,812.9 L1662.1,811.7 L1662.5,810.6 L1662.8,809.5 L1663.2,808.5 L1663.5,807.5 L1663.9,806.6 L1664.2,805.8 L1664.6,805.1 L1664.9,804.5 L1665.3,804.0 L1665.7,803.5 L1666.0,803.2 L1666.4,803.0 L1666.7,802.8 L1667.1,802.8 L1667.4,802.9 L1667.8,803.1 L1668.1,803.4 L1668.5,803.7 L1668.8,804.2 L1669.2,804.8 L1669.5,805.5 L1669.9,806.2 L1670.3,807.1 L1670.6,808.0 L1671.0,809.0 L1671.3,810.0 L1671.7,811.1 L1672.0,812.3 L1672.4,813.5 L1672.7,814.8 L1673.1,816.0 L1673.4,817.3 L1673.8,818.6 L1674.1,819.9 L1674.5,821.2" fill="none" stroke="#00b8f0" stroke-width="1.8" />
<path d="M1603.7,818.8 L1675,818.8" fill="none" stroke="#e0109a" stroke-width="2" />
</g>
<rect x="1740" y="98" width="202" height="16" fill="#223a5c" />
<path d="M1748.5,102.0 L1755.5,106 L1748.5,110.0 Z" fill="#fff" stroke="none" stroke-width="1" />
<text xml:space="preserve" x="1763.58" y="110" font-size="10.97" fill="#fff" textLength="53.35" lengthAdjust="spacingAndGlyphs" >Rendering</text>
<rect x="1740" y="117" width="202" height="16" fill="#223a5c" />
<path d="M1748.0,121.5 L1756.0,121.5 L1752,128.5 Z" fill="#fff" stroke="none" stroke-width="1" />
<text xml:space="preserve" x="1763.56" y="129" font-size="10.97" fill="#fff" textLength="59.44" lengthAdjust="spacingAndGlyphs" >Filter graph</text>
<rect x="1743" y="136" width="84" height="16" fill="#172233" />
<text xml:space="preserve" x="1745.89" y="148" font-size="10.97" fill="#9a9a9a" textLength="5.88" lengthAdjust="spacingAndGlyphs" >3</text>
<text xml:space="preserve" x="1830.20" y="148" font-size="10.97" fill="#9a9a9a" textLength="57.66" lengthAdjust="spacingAndGlyphs" >Total filters</text>
<text xml:space="preserve" x="1894.40" y="148" font-size="10.97" fill="#777" textLength="13.67" lengthAdjust="spacingAndGlyphs" >(?)</text>
<rect x="1743" y="155" width="84" height="16" fill="#172233" />
<text xml:space="preserve" x="1745.59" y="167" font-size="10.97" fill="#9a9a9a" textLength="77.29" lengthAdjust="spacingAndGlyphs" >950.30093 ms</text>
<text xml:space="preserve" x="1830.57" y="167" font-size="10.97" fill="#9a9a9a" textLength="51.33" lengthAdjust="spacingAndGlyphs" >Exec time</text>
<text xml:space="preserve" x="1888.40" y="167" font-size="10.97" fill="#777" textLength="13.67" lengthAdjust="spacingAndGlyphs" >(?)</text>
<rect x="1740" y="174" width="202" height="16" fill="#223a5c" />
<path d="M1748.0,178.5 L1756.0,178.5 L1752,185.5 Z" fill="#fff" stroke="none" stroke-width="1" />
<text xml:space="preserve" x="1763.56" y="186" font-size="10.97" fill="#fff" textLength="57.45" lengthAdjust="spacingAndGlyphs" >Acquisition</text>
<clipPath id="wrclip"><rect x="1743" y="193" width="84" height="16"/></clipPath>
<rect x="1743" y="193" width="84" height="16" fill="#172233" />
<text xml:space="preserve" x="1745.59" y="205" font-size="10.97" fill="#9a9a9a" textLength="85.55" lengthAdjust="spacingAndGlyphs" clip-path="url(#wrclip)">992.21730 mHz</text>
<text xml:space="preserve" x="1830.80" y="205" font-size="10.97" fill="#9a9a9a" textLength="75.09" lengthAdjust="spacingAndGlyphs" >Waveform rate</text>
<text xml:space="preserve" x="1912.40" y="205" font-size="10.97" fill="#777" textLength="13.67" lengthAdjust="spacingAndGlyphs" >(?)</text>
<path d="M1748.5,215.25 L1755.5,215.25 L1752,220.75 Z" fill="#fff" stroke="none" stroke-width="1" />
<text xml:space="preserve" x="1760.60" y="222" font-size="10.97" fill="#fff" textLength="36.33" lengthAdjust="spacingAndGlyphs" >ts0010</text>
<rect x="1763" y="227" width="84" height="16" fill="#172233" />
<text xml:space="preserve" x="1765.76" y="239" font-size="10.97" fill="#9a9a9a" textLength="6.13" lengthAdjust="spacingAndGlyphs" >0</text>
<clipPath id="pwclip"><rect x="1740" y="220" width="206" height="30"/></clipPath>
<text xml:space="preserve" x="1850.07" y="239" font-size="10.97" fill="#9a9a9a" textLength="102.28" lengthAdjust="spacingAndGlyphs" clip-path="url(#pwclip)">Pending waveforms</text>
<rect x="1740" y="246" width="202" height="16" fill="#223a5c" />
<path d="M1748.5,250.0 L1755.5,254 L1748.5,258.0 Z" fill="#fff" stroke="none" stroke-width="1" />
<text xml:space="preserve" x="1763.60" y="258" font-size="10.97" fill="#fff" textLength="40.80" lengthAdjust="spacingAndGlyphs" >Memory</text>
</svg>
</body></html>
